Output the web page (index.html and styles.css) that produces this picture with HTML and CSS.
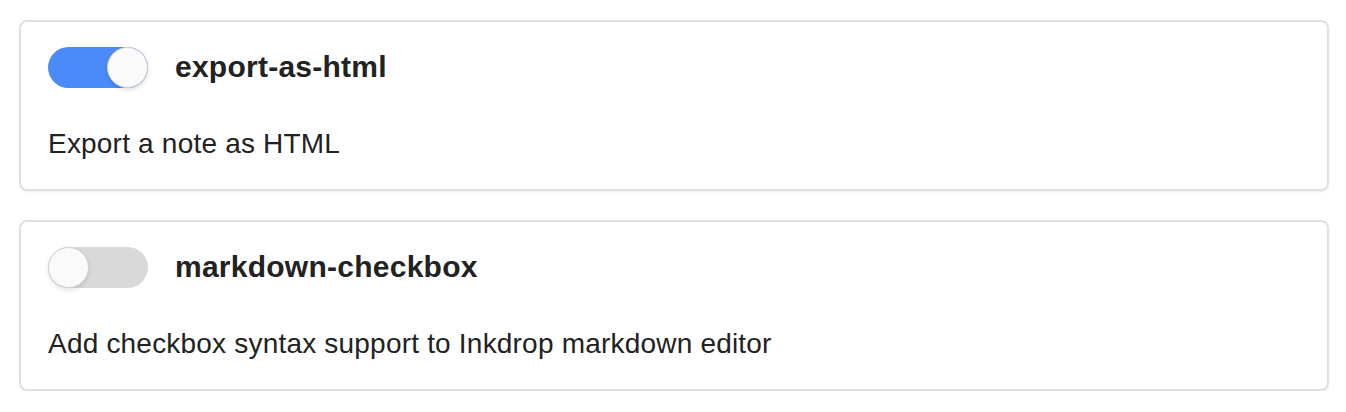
FILE: index.html
```html
<!DOCTYPE html>
<html>
<head>
<meta charset="utf-8">
<link rel="stylesheet" href="styles.css">
</head>
<body>
<div class="list">
  <div class="card">
    <div class="head">
      <span class="toggle on"><span class="knob"></span></span>
      <span class="title">export-as-html</span>
    </div>
    <div class="desc">Export a note as HTML</div>
  </div>
  <div class="card">
    <div class="head">
      <span class="toggle"><span class="knob"></span></span>
      <span class="title">markdown-checkbox</span>
    </div>
    <div class="desc">Add checkbox syntax support to Inkdrop markdown editor</div>
  </div>
</div>
</body>
</html>
```
FILE: styles.css
```css
html, body {
  margin: 0;
  padding: 0;
  background: #ffffff;
}
body {
  font-family: "Liberation Sans", Arial, sans-serif;
  color: #222222;
}
.list {
  display: flex;
  flex-direction: column;
  gap: 29px;
  padding: 20px 17px 0 19px;
}
.card {
  box-sizing: border-box;
  height: 171px;
  border: 2px solid #e0e0e0;
  border-radius: 8px;
  box-shadow: 0 1px 2px rgba(0,0,0,0.08);
  padding: 24px 27px 0 27px;
}
.head {
  display: flex;
  align-items: center;
  gap: 27px;
  height: 42px;
}
.toggle {
  position: relative;
  display: block;
  width: 100px;
  height: 41px;
  border-radius: 21px;
  background: #d9d9d9;
  flex: none;
}
.toggle.on {
  background: #4b8bf9;
}
.knob {
  position: absolute;
  top: 0;
  left: 0;
  box-sizing: border-box;
  width: 41px;
  height: 41px;
  border-radius: 50%;
  background: #fafafa;
  border: 1px solid #d2d2d2;
  box-shadow: 0 2px 4px rgba(0,0,0,0.12);
}
.toggle.on .knob {
  left: 59px;
}
.title {
  font-weight: bold;
  font-size: 30px;
  letter-spacing: 0.25px;
}
.desc {
  margin-top: 40px;
  font-size: 28px;
  line-height: 32px;
  letter-spacing: 0.2px;
}
```
